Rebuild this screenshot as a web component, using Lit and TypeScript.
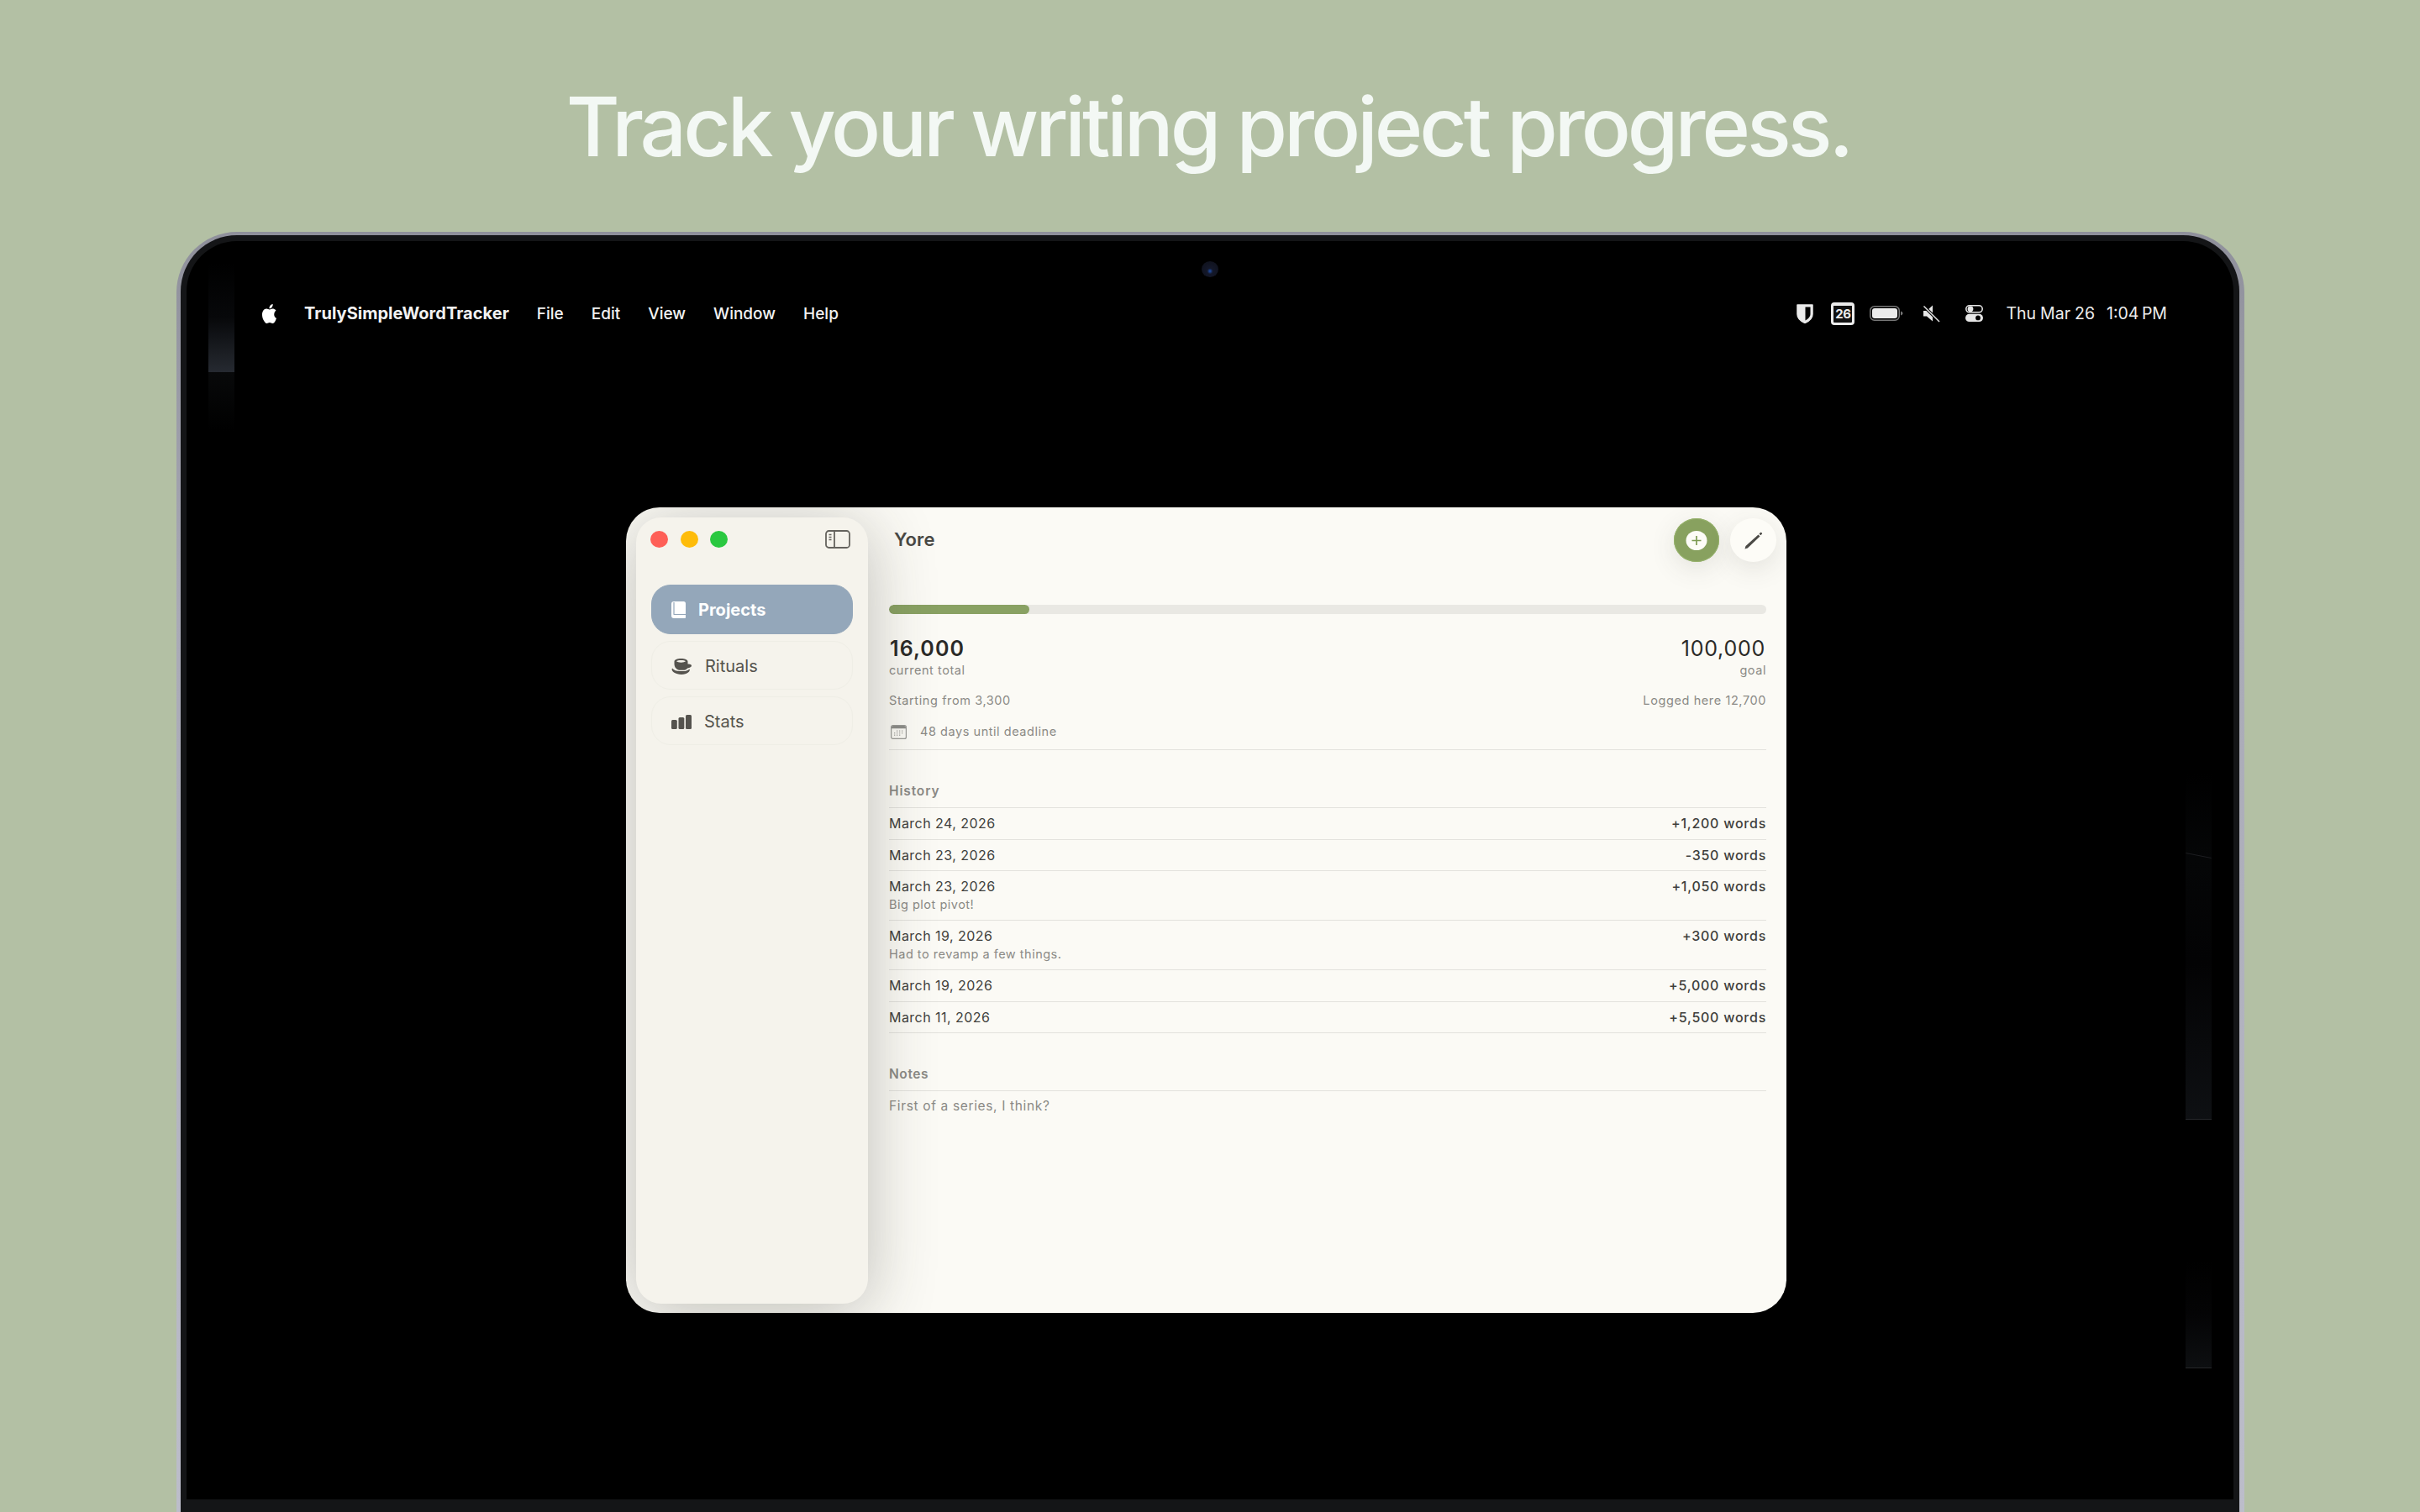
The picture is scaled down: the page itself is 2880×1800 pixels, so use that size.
import { LitElement, html, css, svg } from "lit";
import { customElement } from "lit/decorators.js";

const apple = "M12.152 6.896c-.948 0-2.415-1.078-3.96-1.04-2.04.027-3.91 1.183-4.961 3.014-2.117 3.675-.546 9.103 1.519 12.09 1.013 1.454 2.208 3.09 3.792 3.039 1.52-.065 2.09-.987 3.935-.987 1.831 0 2.35.987 3.96.948 1.637-.026 2.676-1.48 3.676-2.948 1.156-1.688 1.636-3.325 1.662-3.415-.039-.013-3.182-1.221-3.22-4.857-.026-3.04 2.48-4.494 2.597-4.559-1.429-2.09-3.623-2.324-4.39-2.376-2-.156-3.675 1.09-4.61 1.09zM15.53 3.83c.843-1.012 1.4-2.427 1.245-3.83-1.207.052-2.662.805-3.532 1.818-.78.896-1.454 2.338-1.273 3.714 1.338.104 2.715-.688 3.559-1.701";

const history = [
  { date: "March 24, 2026", words: "+1,200 words" },
  { date: "March 23, 2026", words: "-350 words" },
  { date: "March 23, 2026", words: "+1,050 words", note: "Big plot pivot!" },
  { date: "March 19, 2026", words: "+300 words", note: "Had to revamp a few things." },
  { date: "March 19, 2026", words: "+5,000 words" },
  { date: "March 11, 2026", words: "+5,500 words" },
];

const bookIcon = svg`<svg class="i-book" width="17" height="20" viewBox="0 0 17 20"><path d="M3 0h11.500A2.500 2.500 0 0 1 17 2.500V19a1 1 0 0 1-1 1H3a3 3 0 0 1-3-3V3a3 3 0 0 1 3-3z" fill="#fff"/><path d="M2.500 15.500H17M3 1v14" stroke="#94a7ba" stroke-width="1.200" fill="none"/></svg>`;
const cupIcon = svg`<svg width="25" height="19" viewBox="0 0 25 19" fill="#55534e"><path d="M3.500 3.500C3.500 1.500 7 0 11.500 0s8 1.500 8 3.500v3l1.200-.1c2.200 0 3.300 1 3.300 2.100 0 1.400-1.800 2.500-4.800 2.900-1 1.200-2.300 2-3.700 2.300H9C6 13 3.500 10 3.500 6.500z"/><path d="M6 3.300c1 .9 3 1.400 5.500 1.400s4.500-.5 5.500-1.400c-1-.9-3-1.400-5.500-1.400S7 2.400 6 3.300z" fill="#f5f3ec"/><path d="M1 11.500c2 2.300 5 3.600 9 3.600h4c3.500 0 6-1.200 7.500-2.600.8 1 .3 2.600-1.500 4-1.800 1.500-4.500 2.500-8 2.500S5.500 18 3 16.500C.8 15 0 13 1 11.500z"/></svg>`;
const barsIcon = svg`<svg width="24" height="17" viewBox="0 0 24 17" fill="#55534e"><rect x="0" y="6" width="6.800" height="11" rx="1.500"/><rect x="8.500" y="3" width="6.800" height="14" rx="1.500"/><rect x="17" y="0" width="7" height="17" rx="1.500"/></svg>`;
const calIcon = svg`<svg width="19" height="17" viewBox="0 0 19 17"><rect x=".6" y=".6" width="17.800" height="15.800" rx="2" fill="none" stroke="#9a9a96" stroke-width="1.200"/><path d="M1 3a2 2 0 0 1 2-2h13a2 2 0 0 1 2 2v1.200H1z" fill="#8d8d89"/><g fill="#a5a5a1"><rect x="7" y="6.500" width="1.300" height="1.300"/><rect x="10" y="6.500" width="1.300" height="1.300"/><rect x="13" y="6.500" width="1.300" height="1.300"/><rect x="4" y="9" width="1.300" height="1.300"/><rect x="7" y="9" width="1.300" height="1.300"/><rect x="10" y="9" width="1.300" height="1.300"/><rect x="13" y="9" width="1.300" height="1.300"/><rect x="4" y="11.500" width="1.300" height="1.300"/><rect x="7" y="11.500" width="1.300" height="1.300"/><rect x="10" y="11.500" width="1.300" height="1.300"/></g></svg>`;
const sideIcon = svg`<svg width="30" height="22" viewBox="0 0 30 22" fill="none" stroke="#65635e" stroke-width="1.800"><rect x="1" y="1" width="28" height="20" rx="3.500"/><path d="M11 1v20"/><path d="M4.500 5.500h3M4.500 8.500h3M4.500 11.500h3" stroke-width="1.300"/></svg>`;
const penIcon = svg`<svg width="22" height="21" viewBox="0 0 22 21"><path d="M0.500 20.500l1-3.400L16.500 3.500l2 2L3.800 19.600z" fill="#4b4a46"/><path d="M17.500 2.500l1.500-1.500a1 1 0 0 1 1.400 0l.4.400a1 1 0 0 1 0 1.400L19.300 4.300z" fill="#4b4a46"/></svg>`;
const shieldIcon = svg`<svg width="20" height="23" viewBox="0 0 20 23"><path d="M1 1h18v11c0 5-4.500 8.500-9 10.500C5.500 20.500 1 17 1 12z" fill="#ebebeb" stroke="#ebebeb" stroke-width="1.500" stroke-linejoin="round"/><path d="M10.500 3.500h6V12c0 3.300-2.800 5.800-6 7.500z" fill="#000"/></svg>`;
const batteryIcon = svg`<svg width="40" height="18" viewBox="0 0 40 18"><rect x=".75" y=".75" width="34.500" height="16.500" rx="5" fill="none" stroke="#777" stroke-width="1.500"/><rect x="3" y="3" width="30" height="12" rx="3" fill="#ececec"/><path d="M37 6.500c1.500.4 2.500 1.300 2.500 2.500s-1 2.100-2.500 2.500z" fill="#777"/></svg>`;
const muteIcon = svg`<svg width="22" height="21" viewBox="0 0 22 21"><path d="M1 7h4l7-6.500v19L5 13.500H1z" fill="#e6e6e6"/><path d="M1.500 1.500l18.500 18.500" stroke="#000" stroke-width="3.500"/><path d="M1.500 1.500l18.500 18.500" stroke="#e6e6e6" stroke-width="1.500"/></svg>`;
const controlIcon = svg`<svg width="21" height="20" viewBox="0 0 21 20"><rect x=".8" y=".8" width="19.400" height="8" rx="4" fill="none" stroke="#e6e6e6" stroke-width="1.600"/><circle cx="6" cy="4.800" r="3.400" fill="#e6e6e6"/><rect y="10.800" width="21" height="9.200" rx="4.600" fill="#e6e6e6"/><circle cx="15" cy="15.400" r="2.900" fill="#000"/></svg>`;

@customElement("app-root")
export class AppRoot extends LitElement {
  static styles = css`
    :host {
      display: block;
      width: 2880px;
      height: 1800px;
      overflow: hidden;
      background: #b3c0a4;
      font-family: Inter, "Liberation Sans", sans-serif;
    }
    .title {
      height: 276px;
      margin: 0;
      padding: 93px 4px 0 0;
      box-sizing: border-box;
      text-align: center;
      font-size: 98px;
      line-height: 116px;
      font-weight: 500;
      letter-spacing: -4.050px;
      color: #f3f8f4;
      white-space: nowrap;
    }
    .laptop {
      position: relative;
      margin-left: 210px;
      width: 2461px;
      height: 1524px;
      box-sizing: border-box;
      padding: 4px 6px 0 5px;
      border-radius: 72px 72px 0 0;
      background: linear-gradient(180deg, #8f909b 0, #a9aab6 30%, #bcbdca 100%);
    }
    .bezel {
      height: 100%;
      box-sizing: border-box;
      padding: 7px 7px 15px 7px;
      border-radius: 67px 67px 0 0;
      background: #141517;
    }
    .screen {
      position: relative;
      height: 100%;
      background: #000;
      border-radius: 60px 60px 0 0;
    }
    .glow {
      position: absolute;
      display: block;
    }
    .g1 { left: 26px; top: 26px; width: 31px; height: 130px; background: linear-gradient(180deg, #000, #07080a 50%, #262a31); }
    .g2 { left: 26px; top: 156px; width: 31px; height: 70px; background: linear-gradient(180deg, #08090a, #000); }
    .g3 { left: 2379px; top: 633px; width: 31px; height: 412px; background: linear-gradient(180deg, #000, #050607 25%, #030304 55%, #0e1013); border-bottom: 1px solid #26272a; }
    .g4 { left: 2379px; top: 1213px; width: 31px; height: 128px; background: linear-gradient(180deg, #000, #040405 50%, #0d0f11); border-bottom: 1px solid #26272a; }
    .g5 { left: 2379px; top: 731px; width: 31px; height: 1px; background: #1d1e21; transform: rotate(11deg); }
    .cam {
      position: absolute;
      left: 1208px;
      top: 24px;
      width: 20px;
      height: 19px;
      border-radius: 50%;
      background: radial-gradient(circle at 50% 62%, #1f50b0 0, #14182a 22%, #10131f 70%);
    }
    .menubar {
      display: flex;
      align-items: center;
      height: 172px;
      padding: 0 79px 0 88px;
      box-sizing: border-box;
      color: #f2f2f2;
      font-size: 19px;
      font-weight: 500;
      white-space: nowrap;
    }
    .apple { width: 21px; height: 23px; fill: #fff; margin-right: 31px; flex: none; }
    .app { font-size: 20px; font-weight: 700; margin-right: 33px; letter-spacing: .03px; }
    .menu { margin-right: 33px; }
    .spacer { flex: 1; }
    .status { display: flex; align-items: center; flex: none; }
    .status > * { flex: none; }
    .date-badge {
      display: flex;
      align-items: center;
      justify-content: center;
      width: 28px;
      height: 27px;
      box-sizing: border-box;
      border: 3px solid #ececec;
      border-top-width: 4px;
      border-radius: 4px;
      margin: 0 18px 0 21px;
      background: #111;
      color: #ececec;
      font-size: 15px;
      font-weight: 700;
      letter-spacing: -.3px;
    }
    .s3 { margin-right: 23px; display: flex; }
    .s4 { margin-right: 29px; display: flex; }
    .s5 { margin-right: 27px; display: flex; }
    .clock { font-size: 19.500px; font-weight: 400; color: #ececec; word-spacing: -.5px; }
    .clock span { margin-left: 14px; word-spacing: -2px; }
    .window {
      display: flex;
      width: 1381px;
      height: 959px;
      margin: 145px 0 0 523px;
      box-sizing: border-box;
      padding: 12px 0 11px 12px;
      border-radius: 40px;
      overflow: hidden;
      background: #fbfaf5;
      color: #2e2d2a;
    }
    .sidebar {
      position: relative;
      flex: none;
      width: 276px;
      box-sizing: border-box;
      padding: 0 18px;
      border-radius: 30px;
      background: #f5f3ec;
      box-shadow: 0 10px 80px rgba(50, 50, 40, .3);
      z-index: 1;
    }
    .traffic {
      display: flex;
      align-items: center;
      height: 52px;
    }
    .dot { width: 21px; height: 20px; border-radius: 50%; margin-right: 14.500px; flex: none; }
    .dot.r { background: #fe5f57; margin-left: -1px; }
    .dot.y { background: #febc0a; }
    .dot.g { background: #2ac840; }
    .toggle { margin-left: auto; margin-right: 3px; display: flex; }
    .nav { display: flex; flex-direction: column; gap: 8px; margin-top: 28px; }
    .item {
      display: flex;
      align-items: center;
      height: 58px;
      box-sizing: border-box;
      padding: 2px 0 0 23px;
      border: 1px solid #efeee6;
      border-radius: 23px;
      color: #55534e;
      font-size: 20px;
    }
    .item svg { flex: none; margin-right: 15px; }
    .item.on {
      height: 59px;
      padding: 0 0 0 23px;
      background: #94a7ba;
      border-color: #94a7ba;
      color: #fff;
      font-weight: 700;
    }
    .main {
      flex: 1;
      min-width: 0;
      box-sizing: border-box;
      padding: 1px 24px 0 25px;
      margin: -12px 0 -11px 0;
    }
    .head {
      display: flex;
      align-items: center;
      height: 52px;
      margin-top: 12px;
      margin-right: -12px;
    }
    .name { margin: -2px 0 0 6px; font-size: 22px; font-weight: 600; color: #4a4945; letter-spacing: .1px; }
    .round {
      display: flex;
      align-items: center;
      justify-content: center;
      flex: none;
      height: 52px;
      border-radius: 50%;
      box-shadow: 0 8px 30px rgba(70, 70, 60, .13);
    }
    .add { width: 54px; margin-left: auto; background: #88a15f; box-shadow: 0 0 0 1px #97b36c inset, 0 8px 30px rgba(70, 70, 60, .13); }
    .edit { width: 55px; margin-left: 13px; background: #fdfcf7; }
    .plus { display: block; }
    .bar {
      height: 11px;
      margin-top: 51px;
      border-radius: 6px;
      background: #e9e8e3;
      overflow: hidden;
    }
    .fill { height: 100%; border-radius: 6px; background: #89a163; }
    .stats {
      display: flex;
      justify-content: space-between;
      margin-top: 26px;
    }
    .num { font-size: 25px; line-height: 30px; color: #2b2a28; letter-spacing: .75px; }
    .cur { font-weight: 600; padding-left: 1px; letter-spacing: 1.100px; }
    .goal { text-align: right; padding-right: 1px; }
    .lab { font-size: 14.500px; line-height: 20px; margin-top: 1px; color: #8b8a86; letter-spacing: .55px; }
    .goal .lab { margin-right: -1px; }
    .meta {
      display: flex;
      justify-content: space-between;
      margin-top: 16px;
      font-size: 14.500px;
      line-height: 20px;
      color: #8b8a86;
      letter-spacing: .6px;
    }
    .deadline {
      display: flex;
      align-items: center;
      margin-top: 17px;
      padding: 0 0 11px 2px;
      border-bottom: 1px solid #e3e2dd;
      font-size: 14.500px;
      line-height: 20px;
      color: #8b8a86;
      letter-spacing: .55px;
    }
    .deadline svg { margin-right: 16px; flex: none; }
    h2 {
      margin: 39px 0 0;
      padding-bottom: 9px;
      border-bottom: 1px solid #e3e2dd;
      font-size: 15.500px;
      line-height: 20px;
      font-weight: 600;
      color: #8b8a86;
      letter-spacing: .85px;
    }
    .row {
      padding: 8.250px 0;
      border-bottom: 1px solid #e3e2dd;
      font-size: 16px;
      line-height: 20px;
      color: #403f3c;
      letter-spacing: .45px;
    }
    .row.has-note { padding-bottom: 6.750px; }
    .line { display: flex; justify-content: space-between; }
    .words { font-weight: 500; letter-spacing: .75px; }
    .note { font-size: 14.500px; line-height: 23px; color: #8b8a86; letter-spacing: .5px; }
    h2.notes { margin-top: 39px; letter-spacing: .6px; }
    .text { margin-top: 8px; font-size: 15.500px; line-height: 20px; color: #8b8a86; letter-spacing: .65px; }
  `;

  render() {
    return html`
      <h1 class="title">Track your writing project progress.</h1>
      <div class="laptop">
        <div class="bezel">
          <div class="screen">
            <i class="glow g1"></i><i class="glow g2"></i><i class="glow g3"></i><i class="glow g4"></i><i class="glow g5"></i>
            <i class="cam"></i>
            <div class="menubar">
              <svg class="apple" viewBox="0 0 24 24" preserveAspectRatio="none"><path d=${apple} /></svg>
              <span class="app">TrulySimpleWordTracker</span>
              <span class="menu">File</span>
              <span class="menu">Edit</span>
              <span class="menu">View</span>
              <span class="menu">Window</span>
              <span class="menu">Help</span>
              <span class="spacer"></span>
              <div class="status">
                ${shieldIcon}
                <span class="date-badge">26</span>
                <span class="s3">${batteryIcon}</span>
                <span class="s4">${muteIcon}</span>
                <span class="s5">${controlIcon}</span>
                <span class="clock">Thu Mar 26<span>1:04 PM</span></span>
              </div>
            </div>
            <div class="window">
              <aside class="sidebar">
                <div class="traffic">
                  <i class="dot r"></i><i class="dot y"></i><i class="dot g"></i>
                  <span class="toggle">${sideIcon}</span>
                </div>
                <nav class="nav">
                  <div class="item on">${bookIcon}Projects</div>
                  <div class="item">${cupIcon}Rituals</div>
                  <div class="item">${barsIcon}Stats</div>
                </nav>
              </aside>
              <main class="main">
                <div class="head">
                  <span class="name">Yore</span>
                  <span class="round add">
                    <svg class="plus" width="26" height="23" viewBox="0 0 26 23"><ellipse cx="13" cy="11.500" rx="12.500" ry="11.500" fill="#fdfcf7"/><path d="M13 6v11M7.500 11.500h11" stroke="#7d9a52" stroke-width="1.700"/></svg>
                  </span>
                  <span class="round edit">${penIcon}</span>
                </div>
                <div class="bar"><div class="fill" style="width:${(16000 / 100000) * 100}%"></div></div>
                <div class="stats">
                  <div><div class="num cur">16,000</div><div class="lab">current total</div></div>
                  <div class="goal"><div class="num">100,000</div><div class="lab">goal</div></div>
                </div>
                <div class="meta"><span>Starting from 3,300</span><span>Logged here 12,700</span></div>
                <div class="deadline">${calIcon}<span>48 days until deadline</span></div>
                <h2>History</h2>
                ${history.map(
                  (h) => html`<div class="row ${h.note ? "has-note" : ""}">
                    <div class="line"><span>${h.date}</span><span class="words">${h.words}</span></div>
                    ${h.note ? html`<div class="note">${h.note}</div>` : ""}
                  </div>`
                )}
                <h2 class="notes">Notes</h2>
                <div class="text">First of a series, I think?</div>
              </main>
            </div>
          </div>
        </div>
      </div>
    `;
  }
}
